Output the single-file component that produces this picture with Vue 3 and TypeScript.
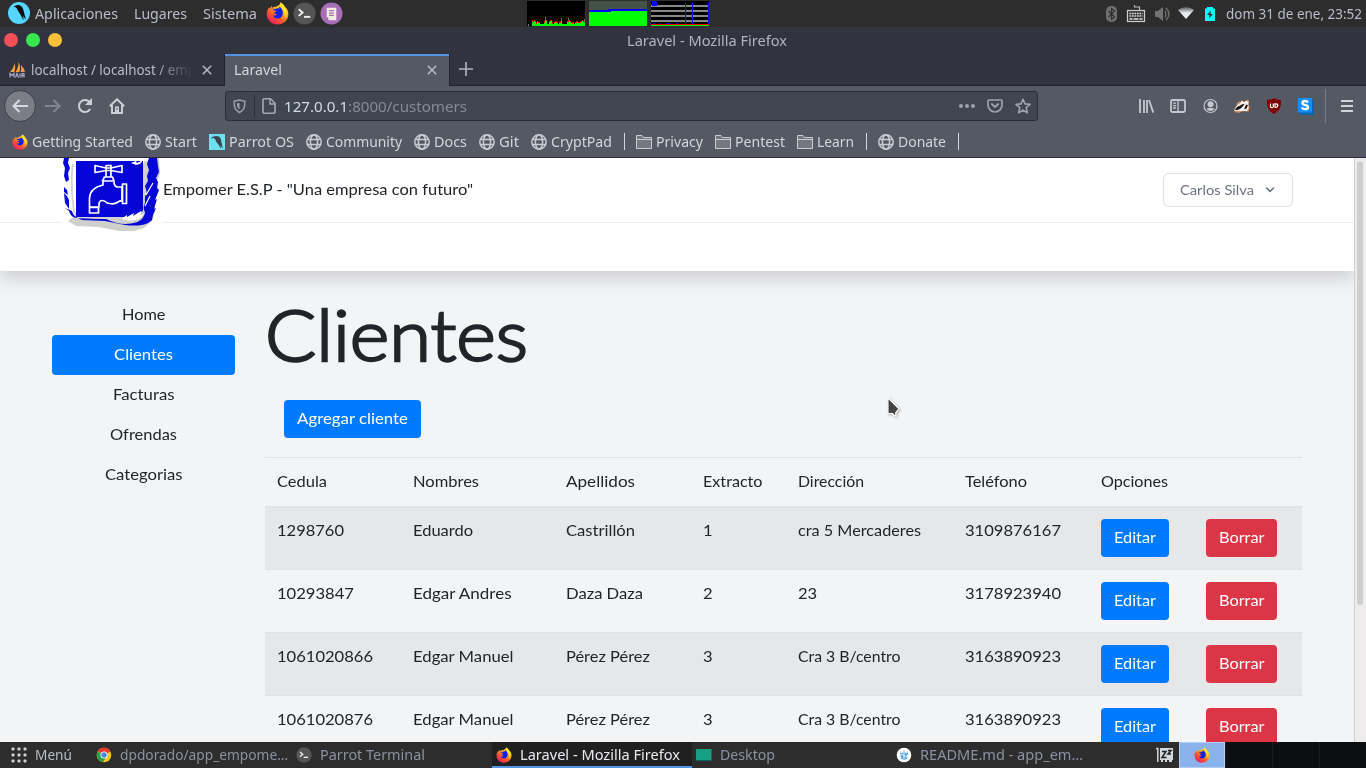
<script setup lang="ts">
interface Bookmark { kind: string; label?: string; width?: number }
interface Cell { text: string; width: number }

// Spreads the letters of a label, or scales its glyphs, so that it fills the given width.
const vFit = {
  mounted(el: HTMLElement, binding: { value: number; modifiers: Record<string, boolean> }) {
    const range = document.createRange()
    range.selectNodeContents(el)
    const natural = range.getBoundingClientRect().width
    const count = (el.textContent ?? '').trim().length
    if (count === 0) return
    if (binding.modifiers.squeeze) {
      el.style.display = 'block'
      el.style.width = `${natural}px`
      el.style.marginRight = `${binding.value - natural}px`
      el.style.transformOrigin = '0 50%'
      el.style.transform = `scaleX(${(binding.value / natural).toFixed(4)})`
    } else {
      el.style.letterSpacing = `${((binding.value - natural) / count).toFixed(3)}px`
    }
  },
}

const bookmarks: Bookmark[] = [
  { kind: 'firefox', label: 'Getting Started', width: 101 },
  { kind: 'globe', label: 'Start', width: 32 },
  { kind: 'parrot', label: 'Parrot OS', width: 65 },
  { kind: 'globe', label: 'Community', width: 76 },
  { kind: 'globe', label: 'Docs', width: 33 },
  { kind: 'globe', label: 'Git', width: 20 },
  { kind: 'globe', label: 'CryptPad', width: 61 },
  { kind: 'sep' },
  { kind: 'folder', label: 'Privacy', width: 47 },
  { kind: 'folder', label: 'Pentest', width: 50 },
  { kind: 'folder', label: 'Learn', width: 37 },
  { kind: 'sep' },
  { kind: 'globe', label: 'Donate', width: 48 },
  { kind: 'sep' },
]

const menu = [
  { label: 'Home', width: 43.5 },
  { label: 'Clientes', width: 59, active: true },
  { label: 'Facturas', width: 61.5 },
  { label: 'Ofrendas', width: 67 },
  { label: 'Categorias', width: 77.5 },
]

const cell = (text: string, width: number): Cell => ({ text, width })
const heads: Cell[] = [
  cell('Cedula', 50), cell('Nombres', 66), cell('Apellidos', 69), cell('Extracto', 59.5),
  cell('Dirección', 66), cell('Teléfono', 62), cell('Opciones', 67),
]
const rows: Cell[][] = [
  [cell('1298760', 67), cell('Eduardo', 60), cell('Castrillón', 69), cell('1', 9.6), cell('cra 5 Mercaderes', 123), cell('3109876167', 96)],
  [cell('10293847', 77), cell('Edgar Andres', 98.5), cell('Daza Daza', 77), cell('2', 9.6), cell('23', 19.2), cell('3178923940', 96)],
  [cell('1061020866', 96), cell('Edgar Manuel', 100.5), cell('Pérez Pérez', 84), cell('3', 9.6), cell('Cra 3 B/centro', 102.5), cell('3163890923', 96)],
  [cell('1061020876', 96), cell('Edgar Manuel', 100.5), cell('Pérez Pérez', 84), cell('3', 9.6), cell('Cra 3 B/centro', 102.5), cell('3163890923', 96)],
]

const load = [1, 0, 0, 0, 0, 4, 3, 4, 3, 2, 3, 2, 2, 1, 1, 1, 1, 3, 5, 4, 1, 1, 3, 4, 4, 2, 1, 2, 3, 3, 2, 1, 2, 3, 4, 1, 1, 1, 1, 1, 3, 4, 4, 3, 2, 2, 2, 1, 2, 3, 3, 2, 2, 3, 3, 4, 3, 4]
</script>

<template>
  <div class="desktop">
    <svg class="defs" width="0" height="0">
      <defs>
        <linearGradient id="ffBody" x1=".85" y1=".05" x2=".2" y2=".95">
          <stop offset="0" stop-color="#fff23a" /><stop offset=".35" stop-color="#ffb01f" />
          <stop offset=".65" stop-color="#ff5a2a" /><stop offset="1" stop-color="#f0186a" />
        </linearGradient>
        <linearGradient id="wifiFill" x1="0" y1="0" x2="0" y2="1">
          <stop offset="0" stop-color="#555" /><stop offset=".5" stop-color="#e8eaf0" />
        </linearGradient>
        <symbol id="firefox" viewBox="0 0 24 24">
          <path d="M3.6 5.6 4.3 7l1.6-3.2.6 2.1C8 5 9.6 4.600 11 4.600L13.800 3 15.300.6c2.300 1.300 3.500 2.700 4.200 4.200 2.700 2.300 4 5 3.800 8.300C23 19 18 23.600 12 23.600S.8 19 .8 12.600C.8 9.800 1.800 7.300 3.600 5.600z" fill="url(#ffBody)" />
          <path d="M6.500 7 10 7.500c1-.6 2.600-1.400 4.200-.7L13.500 4.500c3 1.700 4.600 4.600 4 8-.6 3.300-3.200 5.200-6 4.700-2-.3-3.700-1.700-4.200-3.500 1.500.8 3 .6 4.200-.5l-3.200-1.800 2.800-1.800-2.300-.7z" fill="#1020e8" />
          <path d="M15.300.6c3 1.700 4.300 4 4.500 6 2.300 3 2 7.500-.6 10.300 1-4 .3-7-2-9.200-1.500-1.500-3-3.500-1.900-7.100z" fill="#ffe32f" />
        </symbol>
        <symbol id="globe" viewBox="0 0 16 16">
          <g fill="none" stroke="#c9ccd4" stroke-width="1.500">
            <circle cx="8" cy="8" r="7.200" /><ellipse cx="8" cy="8" rx="3.600" ry="7.200" />
            <path d="M1.500 5.400h13M1.500 10.600h13" />
          </g>
        </symbol>
        <symbol id="folder" viewBox="0 0 16 16">
          <path d="M.5 14.500V1.500h5.500L7.500 3.500h8v11z" fill="#74777f" stroke="#c9ccd4" />
          <path d="M1 5.500h14.500" stroke="#c9ccd4" />
        </symbol>
        <symbol id="parrot" viewBox="0 0 16 16">
          <path fill="#6fe0f0" d="M0 0h16v16H0z" />
          <path d="M1.500 4.500C3.500 2.300 7 1.300 9.800 2.600c2 1.200 2.300 3.400 2.600 5.400l1.600 7-2.400-3.600.4 3.600-2.600-4.500L7 7.500 6.300 5.200 4.500 4z" fill="#39464d" />
        </symbol>
        <symbol id="terminal" viewBox="0 0 24 24">
          <circle cx="12" cy="12" r="11.500" fill="#555" />
          <path d="m6 7.500 4 3.500-4 3.500" fill="none" stroke="#eee" stroke-width="2" /><path d="M11.500 15.500H18" stroke="#eee" stroke-width="2" />
        </symbol>
        <symbol id="cross" viewBox="0 0 10 10">
          <path d="m.8.8 8.400 8.400m0-8.400L.8 9.200" stroke="#b8bcc6" stroke-width="1.500" />
        </symbol>
      </defs>
    </svg>

    <header class="panel">
      <svg class="logo" viewBox="0 0 22 22"><circle cx="11" cy="11" r="11" fill="#55d6ff" /><path d="M5.500 5C8 2.600 11 2.200 13.300 4.200c1.900 1.800 2.300 4.300 2.900 6.800L18 18l-2.800-4 .3 4.500-2.700-5.300L10 8.800 8.500 6 7 5z" fill="#080a0b" /></svg>
      <span v-fit.squeeze="83" class="p1">Aplicaciones</span>
      <span v-fit.squeeze="53" class="p2">Lugares</span>
      <span v-fit.squeeze="54" class="p3">Sistema</span>
      <svg class="ico24"><use href="#firefox" /></svg>
      <svg class="ico24 gap4"><use href="#terminal" /></svg>
      <svg class="ico24 gap4" viewBox="0 0 24 24"><circle cx="12" cy="12" r="11.500" fill="#a56eb5" /><path d="M7 6h10v13H9.500L7 16.500z" fill="#f1ecdf" /><path d="M9.500 9h5M9.500 11.500h5M9.500 14h5M8 18v-2" stroke="#a56eb5" stroke-width="1.300" /></svg>
      <div class="graphs">
        <svg width="58" height="25">
          <path fill="#000" d="M0 0h58v25H0z" />
          <g v-for="(h, i) in load" :key="i">
            <rect :x="i" :y="24 - h" width="1" :height="h + 1" :fill="i > 4 ? '#00ff00' : '#000'" />
            <rect v-if="h > 1" :x="i" :y="23 - h" width="1" :height="i % 4 === 1 ? 2 : 1" fill="#e01818" />
          </g>
          <path d="M1.500 25v-2M18.500 18v-2M34.500 19v-2M41.500 19v-2M57.500 20v-2" stroke="#777" />
        </svg>
        <svg width="58" height="25"><path fill="#455248" d="M0 0h58v9H0z" /><path fill="#00f" d="M0 9h19V8h39v3H0z" /><path fill="#0f0" d="M0 11h22v-1h36v15H0z" /></svg>
        <svg width="58" height="25">
          <path fill="#000" d="M0 0h58v25H0z" /><path d="M0 5h58M0 10h58M0 15h58M0 20h58" stroke="#888" stroke-width="2" />
          <path d="M34.500 1v23M41.500 1v23M57.500 1v23" stroke="#00f" /><path fill="#00f" d="M1 0h5v5H1zM2 22h2v1H2zM9 22h1v1H9zM16 22h3v1h-3zM25 22h2v1h-2z" />
          <path fill="red" d="M0 23h58v1H0z" /><path fill="#0f0" d="M0 24h58v1H0z" />
        </svg>
      </div>
      <svg class="bt" viewBox="0 0 12 16"><rect width="11" height="16" rx="5" fill="#707070" /><path d="m2.500 5 6 6-3 2.500v-11l3 2.500-6 6" fill="none" stroke="#2d2d2d" stroke-width="1.100" /></svg>
      <svg class="kb" viewBox="0 0 20 18"><path d="M8.500 0v2h5v3" fill="none" stroke="#bbb" stroke-width="1.200" /><rect x="1.500" y="5.500" width="17" height="11" fill="#363636" stroke="#ccc" stroke-width="1.200" /><path d="M3.500 8.500h13m-13 2.500h13" stroke="#ddd" stroke-width="1.500" stroke-dasharray="1.700 .8" /><path d="M3.500 14h3m1 0h5m1 0h3" stroke="#ddd" stroke-width="1.500" /></svg>
      <svg class="vol" viewBox="0 0 16 16"><path d="M0 5h3l5-4v14l-5-4H0z" fill="#737373" /><path d="M10 5q2 3 0 6m1-9q6 6 0 12" fill="none" stroke="#737373" stroke-width="1.300" /></svg>
      <svg class="wifi" viewBox="0 0 16 13"><path d="M0 3Q8-3 16 3L8 12z" fill="url(#wifiFill)" /></svg>
      <svg class="bat" viewBox="0 0 10 14"><path d="M2 0h6v1.500h2V14H0V1.500h2z" fill="#0ff" /><path d="M6 3.500 2 8h2.500L4 11.500 8 7H5.500z" fill="#333" /></svg>
      <span v-fit.squeeze="136" class="clock">dom 31 de ene, 23:52</span>
    </header>

    <div class="titlebar">
      <i class="dot red"></i><i class="dot green"></i><i class="dot yellow"></i>
      <span v-fit.squeeze="160" class="wtitle">Laravel - Mozilla Firefox</span>
    </div>

    <div class="tabs">
      <div class="tab idle">
        <svg class="sails" viewBox="0 0 17 16"><path d="M1 10C4 7 5 4 5.500 1c1 3 .8 6-.2 9zM6.500 10C9 7 9.500 3 9.500 0c2 3 2 7 .7 10zM11.500 10c1-3 .8-5 .3-7 2.500 2 4 5 4 7z" fill="#f5a03c" /><path d="M1 15.500v-4l2 2 2-2v4m1.500 0 1.500-4 1.500 4m1.500-4v4m2 0v-4h2v2h-2m2 2v-4" fill="none" stroke="#a9adcf" stroke-width="1.200" /></svg>
        <span v-fit.squeeze="165" class="fade">localhost / localhost / emp</span>
        <svg class="x"><use href="#cross" /></svg>
      </div>
      <div class="tab open">
        <span v-fit.squeeze="48">Laravel</span>
        <svg class="x"><use href="#cross" /></svg>
      </div>
      <svg class="plus" viewBox="0 0 14 14"><path d="M7 0v14M0 7h14" stroke="#b3b7c2" stroke-width="1.600" /></svg>
    </div>

    <div class="toolbar">
      <div class="back"><svg width="16" height="14" viewBox="0 0 16 14"><path d="M16 7H1.500M7.500 1l-6 6 6 6" fill="none" stroke="#d7d9de" stroke-width="2" /></svg></div>
      <svg class="fwd" viewBox="0 0 16 14"><path d="M0 7h14.500M8.500 1l6 6-6 6" fill="none" stroke="#82858f" stroke-width="2" /></svg>
      <svg class="reload" viewBox="0 0 16 16"><path d="M13.200 11A6 6 0 1 1 12.500 4" fill="none" stroke="#cdd0d7" stroke-width="2" /><path d="M15 0v7H8z" fill="#cdd0d7" /></svg>
      <svg class="home" viewBox="0 0 16 16"><path d="m.8 8.200 7.200-7 7.200 7M3 7v8h10V7" fill="none" stroke="#cdd0d7" stroke-width="1.900" /><path d="M6 8.500h4V15H6z" fill="#cdd0d7" /><path d="M7.500 10h1v2h-1z" fill="#555964" /></svg>
      <div class="url">
        <svg class="shield" viewBox="0 0 14 16"><path d="M7 1 1.200 2.500c0 6 .8 9.500 5.800 12 5-2.500 5.800-6 5.800-12z" fill="none" stroke="#9b9fa9" stroke-width="1.600" /><path d="M7 4v7.500C5 10 4.300 8 4.200 4.800z" fill="#9b9fa9" /></svg>
        <i class="udiv"></i>
        <svg class="page" viewBox="0 0 14 16"><path d="M1 1.500Q1 .8 2 .8h6.500L13 5.300v9q0 .9-1 .9H2q-1 0-1-.9z" fill="none" stroke="#a5a8b1" stroke-width="1.600" /><path d="M8 1v5h5" fill="none" stroke="#a5a8b1" stroke-width="1.400" /></svg>
        <span v-fit.squeeze="183" class="addr">127.0.0.1<b>:8000/customers</b></span>
        <svg class="dots" viewBox="0 0 16 6"><g fill="#9ea2ad"><circle cx="2" cy="3" r="2" /><circle cx="8" cy="3" r="2" /><circle cx="14" cy="3" r="2" /></g></svg>
        <svg class="pocket" viewBox="0 0 16 14"><path d="M2 1h12q1 0 1 1v4a7 7 0 0 1-14 0V2q0-1 1-1z" fill="none" stroke="#9ea2ad" stroke-width="1.700" /><path d="m4.800 5 3.200 3 3.200-3" fill="none" stroke="#9ea2ad" stroke-width="1.800" stroke-linecap="round" /></svg>
        <svg class="star" viewBox="0 0 16 16"><path d="m8 1.300 2 4.600 5 .5-3.800 3.300 1.100 5L8 12.100l-4.300 2.600 1.100-5L1 6.400l5-.5z" fill="none" stroke="#9ea2ad" stroke-width="1.600" stroke-linejoin="round" /></svg>
      </div>
      <div class="tools">
        <svg width="16" height="16" viewBox="0 0 16 16"><path d="M2 1v14M6 2v13M9 2v13" stroke="#c4c7d0" stroke-width="1.800" /><path d="m11 2 4.300 12.600" stroke="#c4c7d0" stroke-width="1.800" /></svg>
        <svg width="16" height="16" viewBox="0 0 16 16"><rect x="1" y="2" width="14" height="12" rx="1.500" fill="none" stroke="#c4c7d0" stroke-width="1.800" /><path d="M8 2v12M3 5.200h3M3 7.600h3M3 10h3" stroke="#c4c7d0" stroke-width="1.300" /></svg>
        <svg width="16" height="16" viewBox="0 0 16 16"><circle cx="8.500" cy="8" r="6.500" fill="none" stroke="#c4c7d0" stroke-width="1.200" /><circle cx="8.500" cy="6.200" r="3" fill="#c4c7d0" /><path d="M4.200 11q4.300-2.500 8.600 0-4.300 4-8.600 0z" fill="#c4c7d0" /></svg>
        <svg width="17" height="16" viewBox="0 0 17 16"><path d="M.8 13.500C1 10 3 7 7 4.500L8.500 2l2.500 1.500L14 2l2.200.8-.4 4 .7 3-1.500 4-4-.3-5 .6z" fill="#f4eee6" stroke="#6a4b35" stroke-width=".7" /><path d="m2 11.500 2-2.500 6-3 1.500.3-2.500 3-2 1.700-4 1.300zM13 6.800l2 .2-1.500 3.500-2.500.8z" fill="#191512" /><path d="M3.500 6.500 7 3.800M14 2.300l1.800 1.200M2 13.500l5 .5M16 9.500l-1 3.500" stroke="#ee8c50" stroke-width="1.300" /></svg>
        <svg width="16" height="16" viewBox="0 0 16 16"><path d="M8 0Q5 2 1 2c0 8 1 10 7 14 6-4 7-6 7-14Q11 2 8 0z" fill="#800000" /><path d="M4.500 5.500v3q0 1.200 1.400 1.200t1.400-1.200v-3M9 5.800v3.600h1q1.800 0 1.800-1.800T10 5.800z" fill="none" stroke="#fff" stroke-width="1.200" /></svg>
        <svg width="16" height="17" viewBox="0 0 16 17"><path d="m13 0 3 2.500V17H3L0 14z" fill="#0966ad" /><path d="M0 0h14v14.500H0z" fill="#1191ff" /><path d="M10 4.500Q9 3 7 3 4.500 3 4.500 5q0 1.500 2.500 2 3 .5 3 2.400 0 1.800-3 1.800-2.200 0-3.200-1.700" fill="none" stroke="#fff" stroke-width="2.300" /></svg>
      </div>
      <i class="vdiv"></i>
      <svg class="burger" viewBox="0 0 12 12"><path d="M0 1h12M0 6h12M0 11h12" stroke="#d0d3da" stroke-width="1.900" /></svg>
    </div>

    <nav class="bookmarks">
      <template v-for="(b, i) in bookmarks" :key="i">
        <i v-if="b.kind === 'sep'" class="bsep"></i>
        <div v-else class="bm"><svg width="16" height="16"><use :href="'#' + b.kind" /></svg><span v-fit.squeeze="b.width ?? 0">{{ b.label }}</span></div>
      </template>
    </nav>

    <div class="view">
      <main class="site">
        <div class="head">
          <div class="brandbar">
            <svg class="brand" viewBox="0 0 102 75">
              <path fill="#fff" d="M0 0h102v75H0z" />
              <path d="M90 0h8l1 16-3 7 1 10-3 10v10l-3 10-8 7-10 3H58L38 69l-23-1-8-5z" fill="#cfcfcb" />
              <path d="M3 0h5L7 5l2 5-2 5 1 7-3 2-2-6 1-8-2-5zM3 29l3 3 1 5-4-3zM3 35l3 3 2 4v9l-4-6z" fill="#0505d8" />
              <path d="M4 50l4 3q2 7 8 7l29 1q10 5 20 5 11-1 13-3 5-3 6-8l-2-7 2-4-1-4 3-5-2-7 3-5-1-5 2-6-2-6 2-6h8l1 8 1 6-3 6 2 4-1 6 2 2-4 10 2-1-3 10 2-1-3 7-1 5q-4 4-10 5-8 1-17 0l-20-4-23-1q-9-3-10-9z" fill="#0505d8" />
              <path d="M12 6c-2 10-1 20-1 30l2 18 4 5 32 1 10 3" fill="none" stroke="#d2d2ce" stroke-width="1.800" />
              <path d="m84 3 0 12-1 15 0 15-3 10" fill="none" stroke="#d2d2ce" stroke-width="1.600" />
              <path d="M15 3h67v50l-4 2-3 4H15z" fill="#0505d8" />
              <path d="m70 5 5-2 1 2 6-3-3 4-4 1zM60 61l6-4v2l7-4-1 3 8-5-1 4 4-1-5 5-8 2z" fill="#fff" />
              <path d="m84 48 5-10M85 37l7-12" stroke="#fff" stroke-width="1.200" />
              <g fill="none" stroke="#fff" stroke-width="1.700" stroke-linejoin="round">
                <path d="m34 7.500 11 2.500h5l11-2.500v7L50 12.500h-5l-11 2zM45 7.500h5V19h-5zM43.500 19h8l1.500 4H41.500z" />
                <path d="M42 23.500V27q-13 3-13.500 13v9H38q-.5-6.500 3-6.500 3 0 5 2.500 7 2 11-1 2-1.500 4-1V29h-5q-3-1-3-5.500" />
                <path d="M61.500 26h4v19.500h-4zM28.500 49.500h9V55h-9z" />
              </g>
            </svg>
            <span v-fit.squeeze="310" class="company">Empomer E.S.P - "Una empresa con futuro"</span>
            <div class="user"><span v-fit.squeeze="74">Carlos Silva</span><svg width="10" height="6" viewBox="0 0 10 6"><path d="m1.500 1 3.500 3.400L8.500 1" fill="none" stroke="#6b7280" stroke-width="1.600" stroke-linecap="round" stroke-linejoin="round" /></svg></div>
          </div>
        </div>
        <div class="body">
          <aside class="side">
            <a v-for="m in menu" :key="m.label" :class="{ on: m.active }"><span v-fit.squeeze="m.width">{{ m.label }}</span></a>
          </aside>
          <section class="content">
            <h1><span v-fit.squeeze="263">Clientes</span></h1>
            <div class="addrow"><a class="btn add"><span v-fit.squeeze="111">Agregar cliente</span></a></div>
            <div class="table">
              <div class="tr"><div v-for="h in heads" :key="h.text" class="td"><span v-fit.squeeze="h.width">{{ h.text }}</span></div></div>
              <div v-for="(r, i) in rows" :key="i" class="tr row" :class="{ odd: i % 2 === 0 }">
                <div v-for="(c, j) in r" :key="j" class="td"><span v-fit.squeeze="c.width">{{ c.text }}</span></div>
                <div class="td act"><a class="btn edit"><span v-fit.squeeze="42">Editar</span></a></div>
                <div class="td act"><a class="btn del"><span v-fit.squeeze="45.500">Borrar</span></a></div>
              </div>
            </div>
          </section>
        </div>
      </main>
      <div class="scroll"><i></i></div>
    </div>

    <footer class="tasks">
      <div class="task start"><svg width="16" height="16" viewBox="0 0 16 16"><g fill="#d0d3da"><template v-for="r in 3" :key="r"><rect v-for="c in 3" :key="c" :x="(c - 1) * 6 + .5" :y="(r - 1) * 6 + .5" width="3" height="3" rx="1" /></template></g></svg><span v-fit.squeeze="37">Menú</span></div>
      <div class="task t200"><svg width="16" height="16" viewBox="0 0 16 16"><circle cx="8" cy="8" r="7.300" fill="#f9c51d" /><path d="M8 8 1.700 4.300A7.300 7.300 0 0 1 14.400 4.500z" fill="#e33b2e" /><path d="M1.700 4.300A7.300 7.300 0 0 0 7 15.200L10 10z" fill="#2aa14b" /><path d="M1.700 4.300a7.300 7.300 0 0 1 12.700.2H8z" fill="#e33b2e" /><circle cx="8" cy="8" r="3.500" fill="#fff" /><circle cx="8" cy="8" r="2.700" fill="#4285f4" /></svg><span v-fit.squeeze="168">dpdorado/app_empome…</span></div>
      <div class="task t200"><svg width="16" height="16"><use href="#terminal" /></svg><span v-fit.squeeze="105">Parrot Terminal</span></div>
      <div class="task t200 current"><svg width="16" height="16"><use href="#firefox" /></svg><span v-fit.squeeze="160">Laravel - Mozilla Firefox</span></div>
      <div class="task t200"><svg width="16" height="16" viewBox="0 0 16 16"><path d="M0 2h15.500v12H0z" fill="#18a085" /><path d="M0 13h15.500v1H0z" fill="#0d6556" /></svg><span v-fit.squeeze="55">Desktop</span></div>
      <div class="task t200"><svg width="16" height="16" viewBox="0 0 16 16"><circle cx="8" cy="8" r="7.300" fill="#fff" /><path d="m8 3 1.500 3 3-.5-1.500 3 .5 3L8 13l-3.500-2 .3-3L3.500 5.500 6.500 6z" fill="#55a9e8" /><path d="M8 4v8M5 7l6 3" stroke="#fff" stroke-width=".8" /></svg><span v-fit.squeeze="163">README.md - app_em…</span></div>
      <svg class="zz" viewBox="0 0 18 16"><path d="M0 1.500h1.800V15" fill="none" stroke="#d3d8dd" stroke-width="1.500" /><path d="M4 1h13v12H4zM5 13h2v2H5zm4 0h2v2H9zm4 0h3v2h-3z" fill="#d3d8dd" /><path d="M6 4.500h4L6 10.500h4.500M12 3.500h3l-3 3.500h3" fill="none" stroke="#222" stroke-width="1.500" /></svg>
      <div class="pager"><div class="here"><svg width="16" height="16"><use href="#firefox" /></svg></div><i></i><i></i><i></i></div>
    </footer>

    <svg class="pointer" viewBox="0 0 14 22"><path d="M1 1v17h5l2.500 2.500h1V17l3.500-4z" fill="#444" stroke="#fff" stroke-width="1.300" /></svg>
  </div>
</template>

<style>
body { margin: 0; overflow: hidden; background: #f3f4f6; }
</style>

<style scoped>
* { box-sizing: border-box; }
.desktop { position: relative; width: 1366px; height: 768px; overflow: hidden; display: flex; flex-direction: column; font: 15px/20px "Noto Sans", sans-serif; color: #b9bdc8; white-space: nowrap; }
.defs { position: absolute; }
svg { display: block; flex: none; }
span { flex: none; }
.panel { height: 27px; flex: none; display: flex; align-items: center; background: #2d2d2d; padding-left: 8px; }
.logo { width: 22px; height: 22px; margin-top: -2px; }
.panel span { line-height: 27px; }
.p1 { margin-left: 5px; }
.p2 { margin-left: 16px; }
.p3 { margin-left: 16px; }
.p3 + .ico24 { margin-left: 9px; }
.ico24 { width: 23px; height: 23px; margin-top: -1px; }
.gap4 { margin-left: 4px; }
.graphs { display: flex; gap: 4px; margin-left: 184px; height: 25px; width: 182px; }
.bt { width: 12px; height: 16px; margin-left: 397px; }
.kb { width: 20px; height: 18px; margin-left: 8px; }
.vol { width: 16px; height: 16px; margin-left: 9px; }
.wifi { width: 16px; height: 13px; margin-left: 7px; }
.bat { width: 10px; height: 14px; margin-left: 11px; }
.clock { margin-left: 11px; }
.titlebar { height: 27px; flex: none; display: flex; align-items: center; background: #31343f; padding: 0 0 1px 4px; color: #b1b5bf; }
.dot { width: 14px; height: 14px; border-radius: 50%; margin-right: 8px; }
.red { background: #f64e57; }
.green { background: #37e84d; }
.yellow { background: #fcc139; }
.wtitle { margin-left: 557px; }
.tabs { height: 32px; flex: none; display: flex; background: #31343f; border-bottom: 1px solid #1f222b; }
.tab { display: flex; align-items: center; }
.tab span { line-height: 22px; margin-top: -2px; }
.idle { width: 224px; padding-left: 9px; }
.sails { width: 17px; height: 16px; margin-right: 5px; }
.fade { -webkit-mask-image: linear-gradient(90deg, #000 75%, transparent 98%); mask-image: linear-gradient(90deg, #000 75%, transparent 98%); }
.x { width: 10px; height: 10px; }
.idle .x { margin-left: 6px; }
.open { width: 226px; height: 32px; border: solid #1f222b; border-width: 0 1px; background: #555964; box-shadow: inset 0 2px #5294e2; color: #d3d6dc; padding: 0 12px 0 9px; justify-content: space-between; }
.plus { width: 14px; height: 14px; margin: 8px 0 0 9px; }
.toolbar { height: 40px; flex: none; background: #555964; display: flex; align-items: center; padding-left: 4px; }
.back { width: 32px; height: 32px; border-radius: 50%; background: #7b7e87; border: 1px solid #3c3f49; display: flex; align-items: center; justify-content: center; }
.fwd { width: 16px; height: 14px; margin-left: 9px; }
.reload { width: 16px; height: 16px; margin-left: 16px; }
.home { width: 16px; height: 16px; margin-left: 16px; }
.url { width: 813px; height: 30px; margin-left: 100px; background: #404552; border: 1px solid #2b2e39; border-radius: 3px; display: flex; align-items: center; color: #d3dae3; }
.shield { width: 13px; height: 15px; margin-left: 7px; }
.udiv { width: 1px; height: 22px; margin-left: 8px; background: #2b2e39; }
.page { width: 14px; height: 16px; margin-left: 7px; }
.addr { margin-left: 8px; }
.addr b { font-weight: 400; color: #868a95; }
.dots { width: 16px; height: 6px; margin-left: auto; }
.pocket { width: 16px; height: 14px; margin-left: 12px; }
.star { width: 16px; height: 16px; margin: 0 6px 0 12px; }
.tools { width: 176px; margin-left: 100px; display: flex; justify-content: space-between; align-items: center; }
.vdiv { width: 1px; height: 34px; margin-left: 11px; background: #7c7f88; }
.burger { width: 12px; height: 12px; margin-left: 15px; }
.bookmarks { height: 32px; flex: none; background: #555964; border-bottom: 1px solid #2b2e39; display: flex; align-items: center; gap: 12px; padding-left: 12px; color: #d2d5dc; }
.bm { display: flex; align-items: center; gap: 4px; }
.bm span { line-height: 22px; margin-top: -2px; }
.bsep { width: 1px; height: 17px; background: #d3d6dc; margin-right: -1px; }
.view { height: 584px; flex: none; display: flex; overflow: hidden; }
.site { width: 1354px; height: 584px; overflow: hidden; background: #f3f4f6; color: #212529; font: 15.700px/24px Lato, sans-serif; }
.head { height: 113px; background: #fff; box-shadow: 0 8px 16px rgba(0, 0, 0, .15); position: relative; }
.brandbar { height: 65px; border-bottom: 1px solid #ebecee; display: flex; align-items: center; padding: 0 61px; }
.brand { width: 102px; height: 75px; align-self: flex-start; }
.company { margin-top: -2px; }
.user { width: 130px; height: 34px; margin-left: auto; border: 1px solid #dcdfe3; border-radius: 6px; display: flex; align-items: center; gap: 11px; padding-left: 16px; color: #6b7280; font-size: 13.800px; }
.body { display: flex; padding: 24px 52px; }
.side { width: 183px; flex: none; }
.side a { display: flex; justify-content: center; padding: 7px 0 9px; border-radius: 4px; }
.side .on { background: #007bff; color: #fff; }
.content { width: 1037px; margin-left: 30px; flex: none; }
h1 { margin: 0 0 28px; padding-top: 1px; font: 300 71px/76px Lato, sans-serif; -webkit-text-stroke: 2.400px #212529; }
.addrow { padding-left: 19px; height: 57px; }
.btn { display: flex; align-items: center; justify-content: center; height: 38px; padding-bottom: 2px; border-radius: 4px; color: #fff; background: #007bff; }
.add { width: 137px; }
.edit { width: 68px; }
.del { width: 71px; background: #dc3545; }
.tr { height: 49px; border-top: 1px solid #dee2e6; display: grid; grid-template-columns: 136px 153px 137px 95px 167px 136px 105px 108px; }
.row { height: 63px; }
.odd { background: #e6e7e9; }
.td { padding: 11px 0 0 12px; }
.act { padding: 12px 0 0 12px; }
.scroll { width: 12px; height: 584px; border-left: 1px solid #d0cdca; background: #eeecec; padding: 3px 0 0 2px; }
.scroll i { display: block; width: 6px; height: 444px; border-radius: 3px; background: #cecece; }
.tasks { height: 26px; flex: none; background: #2d2d2d; display: flex; color: #8a92a1; }
.task { display: flex; align-items: center; gap: 8px; padding-left: 4px; line-height: 26px; }
.task span { line-height: 24px; margin-top: -2px; }
.start { width: 92px; padding-left: 11px; color: #b9bdc8; }
.t200 { width: 200px; }
.current { background: #202020; color: #e8eaee; box-shadow: inset 0 -2px #5294e2; }
.zz { width: 18px; height: 16px; margin: 5px 0 0 64px; }
.pager { width: 187px; margin-left: 5px; display: flex; gap: 1px; background: #1b1c20; }
.here { width: 46px; background: #8ab2eb; border: 1px solid #b5cdf2; display: flex; align-items: center; justify-content: center; }
.pager > i { flex: 1; background: #0d0e12; }
.pointer { position: absolute; left: 887px; top: 396px; width: 13px; height: 22px; filter: drop-shadow(1px 1px 1px rgba(0, 0, 0, .3)); }
</style>
